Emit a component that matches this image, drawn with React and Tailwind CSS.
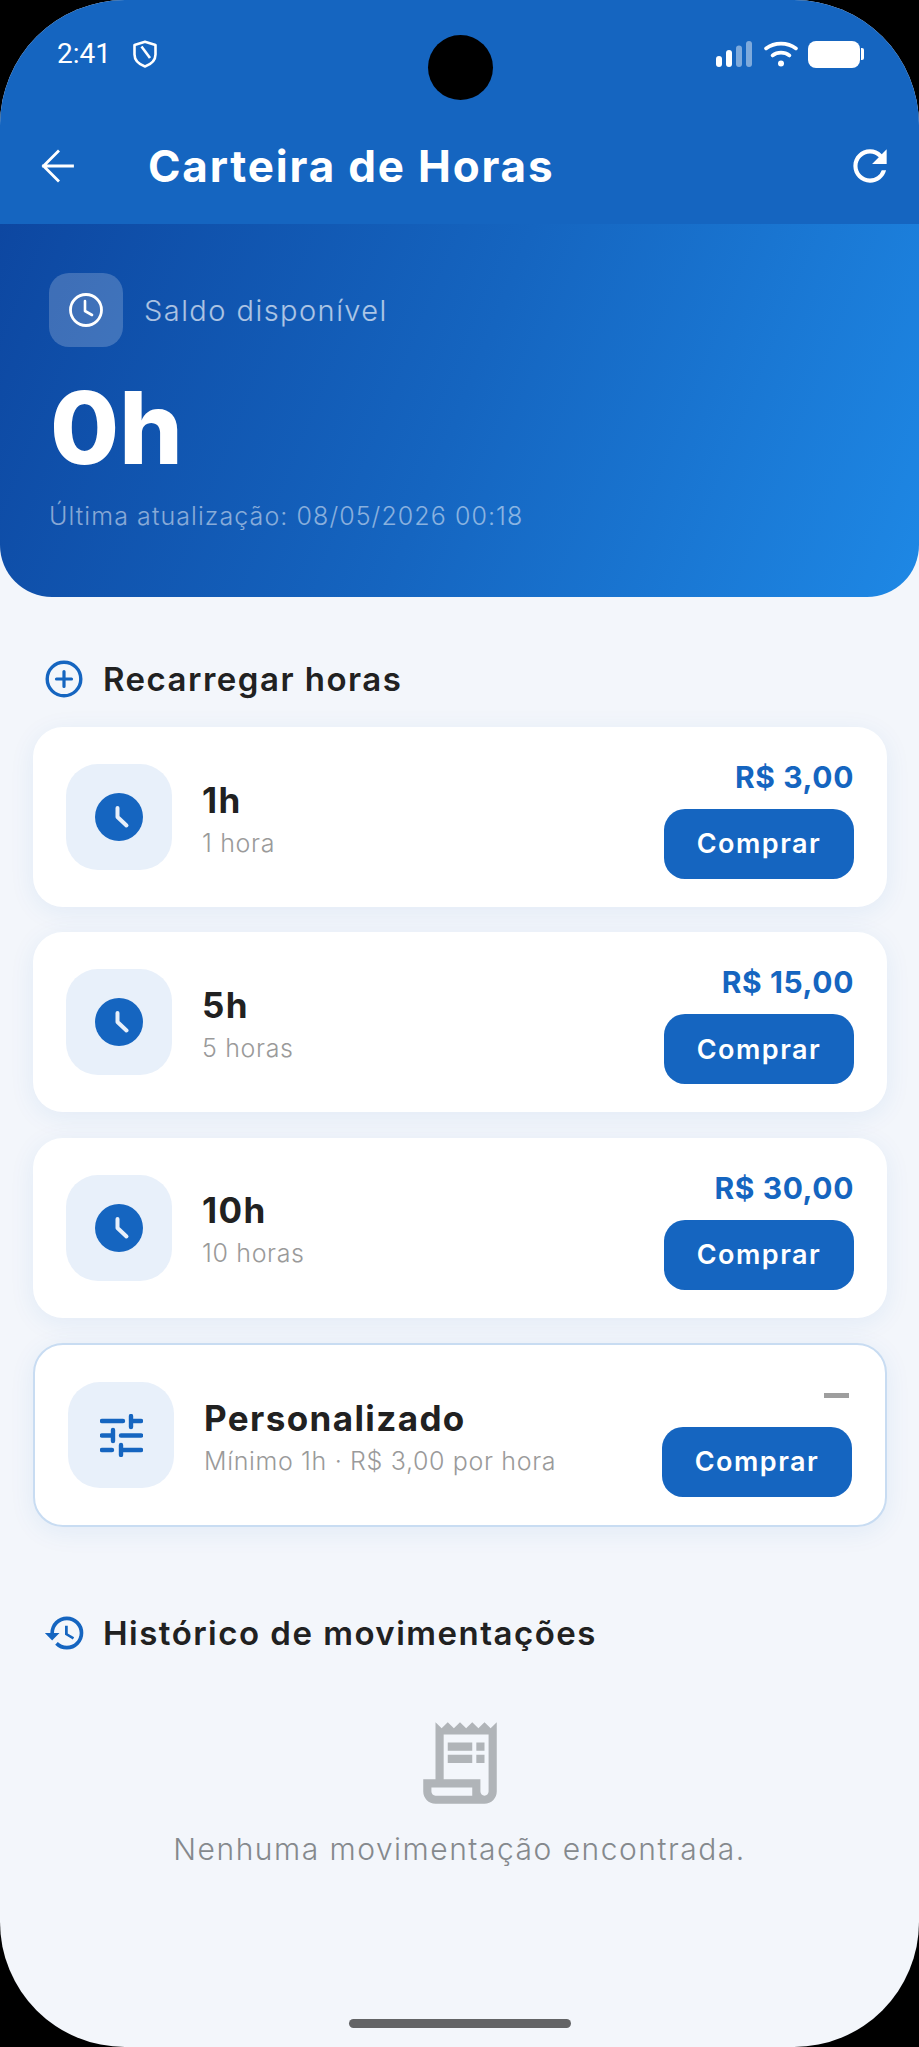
import React from "react";
import { MdOutlineReceiptLong, MdRefresh, MdHistory } from "react-icons/md";

const packs = [
  { title: "1h", sub: "1 hora", price: "R$ 3,00" },
  { title: "5h", sub: "5 horas", price: "R$ 15,00" },
  { title: "10h", sub: "10 horas", price: "R$ 30,00" },
];

const ClockFilled = () => (
  <svg width="48" height="48" viewBox="0 0 48 48">
    <circle cx="24" cy="24" r="24" fill="#1565C0" />
    <path d="M22.5 15v9l9 8.5" fill="none" stroke="#E8F0FA" strokeWidth="4" strokeLinecap="round" strokeLinejoin="round" />
  </svg>
);

const TuneIcon = () => (
  <svg width="43" height="43" viewBox="0 0 43 43" fill="none" stroke="#1565C0" strokeWidth="4.4" strokeLinecap="round">
    <path d="M2 7h21M31 2v11M31 7h10M2 21.500h10M13 16v11M21 21.500h20M2 36h10M21 31v10M21 36h20" />
  </svg>
);

const PlusCircle = () => (
  <svg width="38" height="38" viewBox="0 0 38 38" fill="none" stroke="#1565C0" strokeLinecap="round">
    <circle cx="19" cy="19" r="16.800" strokeWidth="3.400" />
    <path d="M19 11.500v15M11.500 19h15" strokeWidth="3.200" />
  </svg>
);

const Section = ({ icon, title }) => (
  <div className="flex h-[48px] items-center gap-[20px] pl-[12px]">
    {icon}
    <h2 className="text-[33px] font-semibold leading-none tracking-[0.045em] text-[#212121]">{title}</h2>
  </div>
);

const BuyButton = () => (
  <button className="mt-[10px] flex h-[70px] w-[190px] items-center justify-center rounded-[21px] bg-[#1565C0] pt-[1px] text-[27px] font-semibold tracking-[0.055em] text-white">
    Comprar
  </button>
);

const PackCard = ({ title, sub, price }) => (
  <div className="flex items-center rounded-[30px] bg-white py-[28px] pl-[33px] pr-[33px] shadow-[0_5px_26px_rgba(21,101,192,0.08)]">
    <div className="flex h-[106px] w-[106px] items-center justify-center rounded-[32px] bg-[#E8F0FA]">
      <ClockFilled />
    </div>
    <div className="ml-[30px] mt-[3px] flex-1">
      <div className="h-[44px] text-[35px] font-bold leading-[44px] tracking-[0.04em] text-[#212121]">{title}</div>
      <div className="mt-[4px] text-[25px] font-light leading-[34px] tracking-[0.026em] text-[#9a9a9a]">{sub}</div>
    </div>
    <div className="flex flex-col items-end">
      <div className="h-[44px] text-[30px] font-bold leading-[44px] tracking-[0.02em] text-[#1565C0]">{price}</div>
      <BuyButton />
    </div>
  </div>
);

export default function App() {
  return (
    <div className="h-[2047px] w-[919px] bg-black font-['Inter',sans-serif]">
      <div className="relative h-full overflow-hidden rounded-[125px] bg-[#F3F6FB]">
        <div className="absolute left-[428px] top-[35px] h-[65px] w-[65px] rounded-full bg-black" />

        <header className="h-[224px] bg-[#1565C0] text-white">
          <div className="flex h-[108px] items-center px-[57px]">
            <span className="font-['Roboto',sans-serif] text-[28px] leading-none">2:41</span>
            <svg className="ml-[22px]" width="24" height="28" viewBox="0 0 24 28" fill="none" stroke="#fff" strokeWidth="2.600" strokeLinejoin="round">
              <path d="M12 1.800 22.500 5v9.500c0 5.500-4.500 9.800-10.500 12-6-2.200-10.500-6.500-10.500-12V5z" />
              <path d="M8.500 6.500 17 18" />
            </svg>
            <div className="ml-auto mr-[-2px] flex items-center">
              <svg width="36" height="26" viewBox="0 0 36 26">
                <rect x="0" y="15" width="6" height="11" rx="3" fill="#fff" />
                <rect x="10" y="9" width="6" height="17" rx="3" fill="#fff" />
                <rect x="20" y="4.500" width="6" height="21.500" rx="3" fill="#fff" fillOpacity="0.45" />
                <rect x="30" y="0" width="6" height="26" rx="3" fill="#fff" fillOpacity="0.45" />
              </svg>
              <svg className="ml-[12px]" width="34" height="26" viewBox="0 0 34 26" fill="none" stroke="#fff" strokeWidth="3.600" strokeLinecap="round">
                <path d="M2 7.500C10.500 1 23.500 1 32 7.500" />
                <path d="M8.500 14.500c5-3.800 12-3.800 17 0" />
                <circle cx="17" cy="22.500" r="3" fill="#fff" stroke="none" />
              </svg>
              <div className="ml-[10px] h-[27px] w-[52px] rounded-[8px] bg-white" />
              <div className="ml-[1px] h-[12px] w-[3px] rounded-r-[2px] bg-white" />
            </div>
          </div>
          <div className="flex h-[116px] items-center pl-[41px] pr-[24px]">
            <svg width="34" height="34" viewBox="0 0 34 34" fill="none" stroke="#fff" strokeWidth="2.800" strokeLinecap="square">
              <path d="M2.500 17h29M17 2.500 2.500 17 17 31.500" />
            </svg>
            <h1 className="ml-[73px] flex-1 text-[44px] font-bold leading-none tracking-[0.041em]">Carteira de Horas</h1>
            <MdRefresh size={50} color="#fff" />
          </div>
        </header>

        <section className="h-[373px] rounded-b-[52px] bg-[linear-gradient(112deg,#0D47A1,#1565C0,#1E88E5)] pl-[49px] pt-[49px] text-white">
          <div className="flex items-center">
            <div className="flex h-[74px] w-[74px] items-center justify-center rounded-[20px] bg-white/20">
              <svg width="36" height="36" viewBox="0 0 36 36" fill="none" stroke="#fff" strokeLinecap="round" strokeLinejoin="round">
                <circle cx="18" cy="18" r="15.500" strokeWidth="2.800" />
                <path d="M17 9v10l7 4" strokeWidth="2.600" />
              </svg>
            </div>
            <span className="ml-[21px] text-[29px] font-light leading-none tracking-[0.05em] text-white/65">Saldo disponível</span>
          </div>
          <div className="ml-[1px] mt-[24px] h-[114px] text-[100px] font-extrabold leading-[114px]">0h</div>
          <div className="mt-[19px] text-[25px] font-light leading-none tracking-[0.043em] text-white/50">Última atualização: 08/05/2026 00:18</div>
        </section>

        <main className="pl-[33px] pr-[32px] pt-[58px]">
          <Section icon={<PlusCircle />} title="Recarregar horas" />
          <div className="mt-[24px] flex flex-col gap-[25.4px]">
            {packs.map((p) => (
              <PackCard key={p.title} {...p} />
            ))}
            <div className="flex items-center rounded-[30px] border-2 border-[#C8DCF2] bg-white py-[28px] pl-[33px] pr-[33px] shadow-[0_5px_26px_rgba(21,101,192,0.08)]">
              <div className="flex h-[106px] w-[106px] items-center justify-center rounded-[32px] bg-[#E8F0FA]">
                <TuneIcon />
              </div>
              <div className="ml-[30px] mt-[3px] flex-1">
                <div className="h-[44px] text-[35px] font-bold leading-[44px] tracking-[0.04em] text-[#212121]">Personalizado</div>
                <div className="mt-[4px] text-[25px] font-light leading-[34px] tracking-[0.026em] text-[#9a9a9a]">Mínimo 1h · R$ 3,00 por hora</div>
              </div>
              <div className="flex flex-col items-end">
                <div className="flex h-[44px] items-center pr-[3px]">
                  <div className="h-[5px] w-[25px] bg-[#9E9E9E]" />
                </div>
                <BuyButton />
              </div>
            </div>
          </div>
        </main>

        <div className="mt-[82px] pl-[33px]">
          <Section icon={<MdHistory size={44} color="#1565C0" className="-ml-[2px] -mr-[4px]" />} title="Histórico de movimentações" />
        </div>

        <div className="mt-[57px] flex flex-col items-center">
          <MdOutlineReceiptLong size={98} color="#B0B4B8" />
          <p className="mt-[22px] text-[30px] font-light leading-none tracking-[0.05em] text-[#85898D]">Nenhuma movimentação encontrada.</p>
        </div>

        <div className="absolute bottom-[19px] left-[349px] h-[9px] w-[222px] rounded-full bg-[#636466]" />
      </div>
    </div>
  );
}
